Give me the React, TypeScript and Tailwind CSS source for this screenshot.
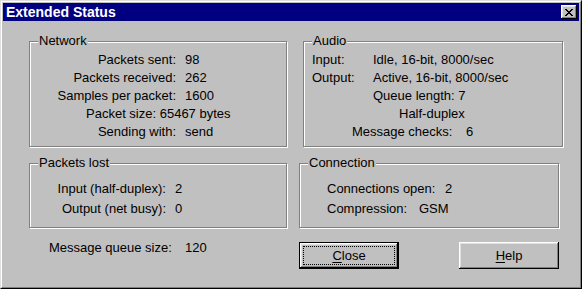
import React from 'react';

const xPixels = [
    'XX....XX',
    '.XX..XX.',
    '..XXXX..',
    '...XX...',
    '..XXXX..',
    '.XX..XX.',
    'XX....XX',
];

function CloseGlyph() {
    return (
        <svg width="8" height="7" viewBox="0 0 8 7" shapeRendering="crispEdges">
            {xPixels.map((row, y) =>
                row.split('').map((c, x) =>
                    c === 'X' ? <rect key={`${x}-${y}`} x={x} y={y} width="1" height="1" fill="#000" /> : null
                )
            )}
        </svg>
    );
}

function GroupBox({
    title,
    className,
    children,
}: {
    title: string;
    className: string;
    children: React.ReactNode;
}) {
    return (
        <div
            className={`relative border border-[#808080] shadow-[1px_1px_0_#fff,inset_1px_1px_0_#fff] ${className}`}
        >
            <span className="absolute left-[8px] top-[-8px] bg-[#c0c0c0] px-[1px] leading-[14px]">
                {title}
            </span>
            {children}
        </div>
    );
}

export default function App() {
    return (
        <div className="w-[582px] h-[289px] bg-[#c0c0c0] font-['Liberation_Sans',Arial,sans-serif] text-[13px] text-black">
            {/* window frame */}
            <div className="w-full h-full border border-t-[#dfdfdf] border-l-[#dfdfdf] border-b-black border-r-black">
                <div className="w-full h-full border border-t-white border-l-white border-b-[#808080] border-r-[#808080] p-[1px] flex flex-col">
                    {/* title bar */}
                    <div className="h-[18px] bg-[#000080] flex items-center justify-between pl-[3px] pr-[2px]">
                        <span className="text-white font-bold text-[14px] leading-[18px]">Extended Status</span>
                        <div className="w-[16px] h-[14px] bg-[#c0c0c0] flex items-center justify-center shadow-[inset_-1px_-1px_0_#000,inset_1px_1px_0_#fff,inset_-2px_-2px_0_#808080,inset_2px_2px_0_#dfdfdf]">
                            <CloseGlyph />
                        </div>
                    </div>

                    {/* body */}
                    <div className="flex flex-col pl-[26px] pt-[20px]">
                        <div className="flex">
                            <GroupBox title="Network" className="w-[258px] h-[106px]">
                                <div className="grid grid-cols-[146px_auto] gap-x-[9px] pt-[9px] leading-[18px]">
                                    <span className="text-right">Packets sent:</span>
                                    <span>98</span>
                                    <span className="text-right">Packets received:</span>
                                    <span>262</span>
                                    <span className="text-right">Samples per packet:</span>
                                    <span>1600</span>
                                    <span className="col-span-2 pl-[56px]">Packet size: 65467 bytes</span>
                                    <span className="text-right">Sending with:</span>
                                    <span>send</span>
                                </div>
                            </GroupBox>
                            <GroupBox title="Audio" className="ml-[16px] w-[260px] h-[106px]">
                                <div className="grid grid-cols-[61px_auto] pt-[9px] pl-[8px] leading-[18px]">
                                    <span>Input:</span>
                                    <span>Idle, 16-bit, 8000/sec</span>
                                    <span>Output:</span>
                                    <span>Active, 16-bit, 8000/sec</span>
                                    <span className="col-start-2">Queue length: 7</span>
                                    <span className="col-start-2 pl-[26px]">Half-duplex</span>
                                    <div className="col-span-2 flex pl-[40px]">
                                        <span className="w-[114px]">Message checks:</span>
                                        <span>6</span>
                                    </div>
                                </div>
                            </GroupBox>
                        </div>

                        <div className="flex mt-[16px]">
                            <GroupBox title="Packets lost" className="w-[258px] h-[65px]">
                                <div className="grid grid-cols-[136px_auto] gap-x-[9px] pt-[15px] leading-[20px]">
                                    <span className="text-right">Input (half-duplex):</span>
                                    <span>2</span>
                                    <span className="text-right">Output (net busy):</span>
                                    <span>0</span>
                                </div>
                            </GroupBox>
                            <GroupBox title="Connection" className="ml-[12px] w-[260px] h-[65px]">
                                <div className="flex flex-col pt-[15px] pl-[27px] leading-[20px]">
                                    <div className="flex">
                                        <span className="w-[118px]">Connections open:</span>
                                        <span>2</span>
                                    </div>
                                    <div className="flex">
                                        <span className="w-[92px]">Compression:</span>
                                        <span>GSM</span>
                                    </div>
                                </div>
                            </GroupBox>
                        </div>

                        <div className="flex items-start mt-[11px]">
                            <div className="w-[270px] flex pl-[20px] leading-[18px]">
                                <span className="w-[136px]">Message queue size:</span>
                                <span>120</span>
                            </div>
                            <button className="relative mt-[3px] w-[100px] h-[27px] border border-black bg-[#c0c0c0] shadow-[inset_-1px_-1px_0_#000,inset_1px_1px_0_#fff,inset_-2px_-2px_0_#808080,inset_2px_2px_0_#dfdfdf] flex items-center justify-center">
                                <span className="absolute inset-[3px] border border-dotted border-black" />
                                <span>
                                    <u className="underline-offset-2">C</u>lose
                                </span>
                            </button>
                            <button className="mt-[3px] ml-[60px] w-[100px] h-[27px] bg-[#c0c0c0] shadow-[inset_-1px_-1px_0_#000,inset_1px_1px_0_#fff,inset_-2px_-2px_0_#808080,inset_2px_2px_0_#dfdfdf] flex items-center justify-center">
                                <span>
                                    <u className="underline-offset-2">H</u>elp
                                </span>
                            </button>
                        </div>
                    </div>
                </div>
            </div>
        </div>
    );
}
